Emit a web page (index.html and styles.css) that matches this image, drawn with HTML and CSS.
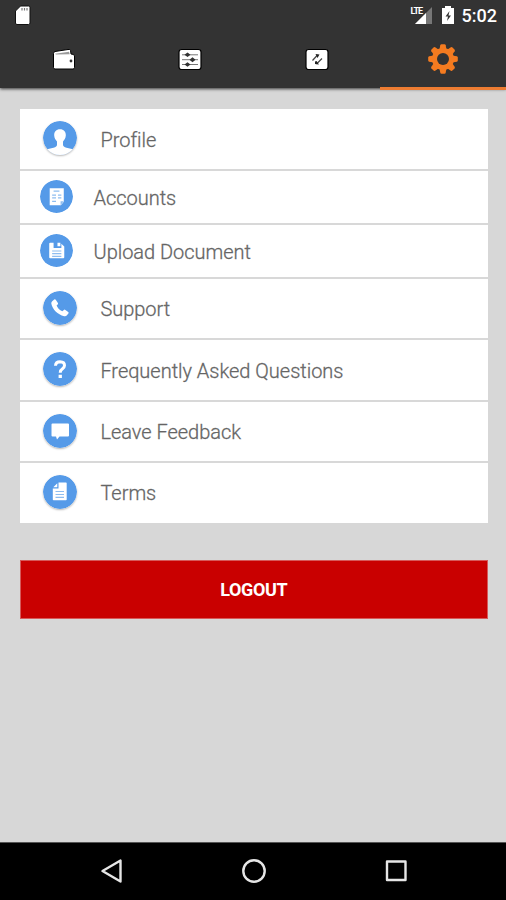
FILE: index.html
```html
<!DOCTYPE html>
<html lang="en">
<head>
<meta charset="utf-8">
<title>Settings</title>
<link rel="stylesheet" href="styles.css">
</head>
<body>
<div class="app">
  <header class="header">
    <div class="status">
      <svg class="sd" width="20" height="24" viewBox="0 0 20 24"><path d="M8 5h8q1.500 0 1.500 1.500V22q0 1.500-1.500 1.500H4.500Q3 23.500 3 22V10z" transform="translate(-.5 -1)" fill="#fff" stroke="#111" stroke-width="1"/><path d="M9 6v2.500M11.500 6v2.500M14 6v2.500" stroke="#777" stroke-width="1.200"/></svg>
      <div class="status-right">
        <div class="signal"><svg width="24" height="22" viewBox="0 0 24 22"><path d="M21 3v17H4z" fill="#777"/><path d="M15 9v11H4z" fill="#fff"/></svg><span class="lte">LTE</span></div>
        <svg class="battery" width="14" height="20" viewBox="0 0 14 20"><path d="M4 1h6v2h3v16H1V3h3z" fill="#fff"/><path d="M8.500 6l-4 5.500H7L6 16l4-5.500H7.500z" fill="#333"/></svg>
        <span class="clock">5:02</span>
      </div>
    </div>
    <nav class="tabs">
      <a class="tab"><svg width="30" height="30" viewBox="0 0 30 30"><path d="M4.500 8.500q0-1.500 1.500-2L19 4.500q2-.5 2.500 1L22 9q3.500 0 3.500 2v11.500q0 1.500-1.500 1.500H6q-1.500 0-1.500-1.500z" fill="#fff" stroke="#000" stroke-width="1"/><path d="M6 8.700l14-2 .8 2.500L7 9.600z" fill="#999"/><circle cx="22" cy="16" r="1.400" fill="#333"/></svg></a>
      <a class="tab"><svg width="30" height="30" viewBox="0 0 30 30"><rect x="4" y="4.500" width="22" height="20" rx="2.500" fill="#fff" stroke="#000" stroke-width="1.200"/><path d="M7 9.800h16M7 14.700h16M7 19.500h16" stroke="#777" stroke-width="1"/><g fill="#333"><path d="M9.500 9.800l3-2.300 3 2.300-3 2.300zM14.500 14.700l3-2.500 3 2.500-3 2.500zM9.500 19.500l3-2.300 3 2.300-3 2.300z"/></g></svg></a>
      <a class="tab"><svg width="30" height="30" viewBox="0 0 30 30"><rect x="4" y="4.500" width="22" height="20" rx="2.500" fill="#fff" stroke="#000" stroke-width="1.200"/><path d="M10.500 15.500l5-5.500M14.500 19l5.500-5.500" stroke="#444" stroke-width="1.200"/><path d="M13.500 9l4 .5-2 3.500zM13 16.500l1.500-.5 2.500 3.500-4-.5z" fill="#222"/></svg></a>
      <a class="tab active"><svg width="32" height="32" viewBox="-16 -16 32 32"><g fill="#f47b20"><g id="teeth"><path id="tooth" d="M-3.600-9l.9-4.800q.2-1 1.200-1h3q1 0 1.200 1L3.600-9v18l-.9 4.800q-.2 1-1.200 1h-3q-1 0-1.200-1L-3.600 9z"/><use href="#tooth" transform="rotate(90)"/></g><use href="#teeth" transform="rotate(45)"/><circle r="11"/></g><circle r="6" fill="#333"/></svg></a>
    </nav>
  </header>

  <main class="content">
    <ul class="menu">
      <li class="row"><svg class="icon" viewBox="0 0 34 34"><circle cx="17" cy="17" r="17" fill="#559ae8"/><path d="M17 8.300c-4 0-6 2.700-5.800 6.200.2 3 1.500 4.500 2.800 6v3.200q0 2-3.500 3L4 28.300A17 17 0 0 0 30 28.300L23.500 26.700q-3.500-1-3.500-3v-3.200c1.300-1.500 2.600-3 2.800-6 .2-3.500-1.800-6.200-5.800-6.200z" fill="#fff"/></svg><span>Profile</span></li>
      <li class="row compact"><svg class="icon" viewBox="0 0 34 34"><circle cx="17" cy="17" r="17" fill="#559ae8"/><path d="M10 8.500h14.500v14L21.500 26H10z" fill="#fff"/><path d="M14 11.500h6M12.500 15.500h4M18.500 15.500h3.500M12.500 18.500h4M18.500 18.500h3.500M12.500 22h4" stroke="#8ebdf0" stroke-width="1.300"/><path d="M24.500 22h-3.300V26" fill="#8ebdf0"/></svg><span>Accounts</span></li>
      <li class="row compact"><svg class="icon" viewBox="0 0 34 34"><circle cx="17" cy="17" r="17" fill="#559ae8"/><path d="M9.500 10q0-1 1-1H14v5.500h8V10l3 3v11q0 1-1 1H10.500q-1 0-1-1zM18 9h3v3.500h-3z" fill="#fff"/><path d="M12.500 17.500h9.500M12.500 20.300h9.500M12.500 23h9.500" stroke="#8ebdf0" stroke-width="1.200"/></svg><span>Upload Document</span></li>
      <li class="row"><svg class="icon" viewBox="0 0 34 34"><circle cx="17" cy="17" r="17" fill="#559ae8"/><path d="M9.200 10.200l2-1.700q1-.6 1.700.4l2 3q.5 1-.3 1.700l-1 1q1.500 4 5.800 5.600l1.400-1.300q.8-.6 1.600 0l2.800 2q.9.800.2 1.700l-1.700 2q-1 1-2.500.6C14.500 23.500 9.500 18.500 8.300 12.500q-.1-1.500.9-2.300z" fill="#fff"/></svg><span>Support</span></li>
      <li class="row"><svg class="icon" viewBox="0 0 34 34"><circle cx="17" cy="17" r="17" fill="#559ae8"/><path d="M12.500 13.800q.2-4 4.600-4 4.400.1 4.400 3.700 0 1.700-2 3.200-2.300 1.500-2.300 4" fill="none" stroke="#fff" stroke-width="3"/><path d="M15.600 22.800h3.300V26h-3.300z" fill="#fff"/></svg><span>Frequently Asked Questions</span></li>
      <li class="row"><svg class="icon" viewBox="0 0 34 34"><circle cx="17" cy="17" r="17" fill="#559ae8"/><path d="M9.500 9.500h15.500q1 0 1 1v11q0 1-1 1h-8.500L14 25.500l-1-3H9.500q-1 0-1-1v-11q0-1 1-1z" fill="#fff"/></svg><span>Leave Feedback</span></li>
      <li class="row"><svg class="icon" viewBox="0 0 34 34"><circle cx="17" cy="17" r="17" fill="#559ae8"/><path d="M15.500 7.500H23q.7 0 .7.700v16.300q0 .7-.7.700H10.500q-.7 0-.7-.7V13.500h5.700zM14.300 8.200v4h-4z" fill="#fff"/><path d="M12.500 16.500h8.500M12.500 19.500h8.500M12.500 22.300h8.500" stroke="#8ebdf0" stroke-width="1.200"/></svg><span>Terms</span></li>
    </ul>
    <button class="logout">LOGOUT</button>
  </main>

  <footer class="navbar">
    <svg width="24" height="28" viewBox="0 0 24 28"><path d="M20.500 3.500v21L2.500 14z"/></svg>
    <svg width="28" height="28" viewBox="0 0 28 28"><circle cx="14" cy="14" r="10.700"/></svg>
    <svg width="24" height="28" viewBox="0 0 24 28"><rect x="3" y="4.500" width="18.500" height="18.500"/></svg>
  </footer>
</div>
</body>
</html>
```
FILE: styles.css
```css
* { box-sizing: border-box; }
body { margin: 0; font-family: Roboto, "Liberation Sans", sans-serif; background: #d7d7d7; }
svg { display: block; flex: none; }
.app { height: 900px; display: flex; flex-direction: column; overflow: hidden; }
.header { height: 88px; background: #333; box-shadow: 0 1px 3px rgba(0,0,0,.75); flex: none; }
.status { height: 30px; display: flex; justify-content: space-between; padding: 2px 9px 0 13px; }
.status-right { display: flex; }
.signal { position: relative; width: 24px; margin: 2px 6px 0 0; }
.lte { position: absolute; left: 0; top: 2px; font-size: 9px; line-height: 10px; font-weight: 700; letter-spacing: -1px; color: #fff; text-shadow: 1px 1px 0 #333; }
.battery { margin: 3px 7px 0 0; }
.clock { font-size: 18px; line-height: 28px; font-weight: 500; color: #fff; }
.tabs { display: flex; height: 60px; padding-left: 1px; }
.tab { flex: 1; display: flex; justify-content: center; align-items: center; height: 60px; padding-top: 2px; border-bottom: 3px solid transparent; }
.active { border-bottom-color: #ed7c32; }
.active svg { margin-top: -1px; }
.content { flex: 1; padding: 21px 18.500px 0 20px; }
.menu { list-style: none; margin: 0; padding: 0; display: grid; grid-template-rows: 60px 52px 52px 59px 60px 59px 59.500px; gap: 2px; background: #d8d8d8; }
.row { background: #fff; display: flex; align-items: center; padding-left: 23px; gap: 23.400px; font-size: 20px; font-weight: 300; color: #606060; -webkit-text-stroke: .3px #707070; }
.row span { padding-top: 1px; letter-spacing: -.02px; }
.icon { width: 34px; height: 34px; border-radius: 50%; box-shadow: 0 1px 2px rgba(0,0,0,.28); margin-top: -2px; }
.compact { padding-left: 20px; gap: 20.500px; }
.compact .icon { width: 33px; height: 33px; box-shadow: none; margin-top: -1px; }
.logout { display: block; width: 100%; height: 59px; margin-top: 37px; border: 1px solid #d65a5a; background: #c90000; color: #fff; font: 700 18px Roboto, sans-serif; letter-spacing: -.4px; padding: 1px 0 0; }
.navbar { height: 58px; flex: none; background: #000; border-top: 1px solid #555; display: flex; justify-content: space-between; padding: 14px 98px 0 100px; }
.navbar svg { fill: none; stroke: #e6e6e6; stroke-width: 2.400; stroke-linejoin: round; }
```
